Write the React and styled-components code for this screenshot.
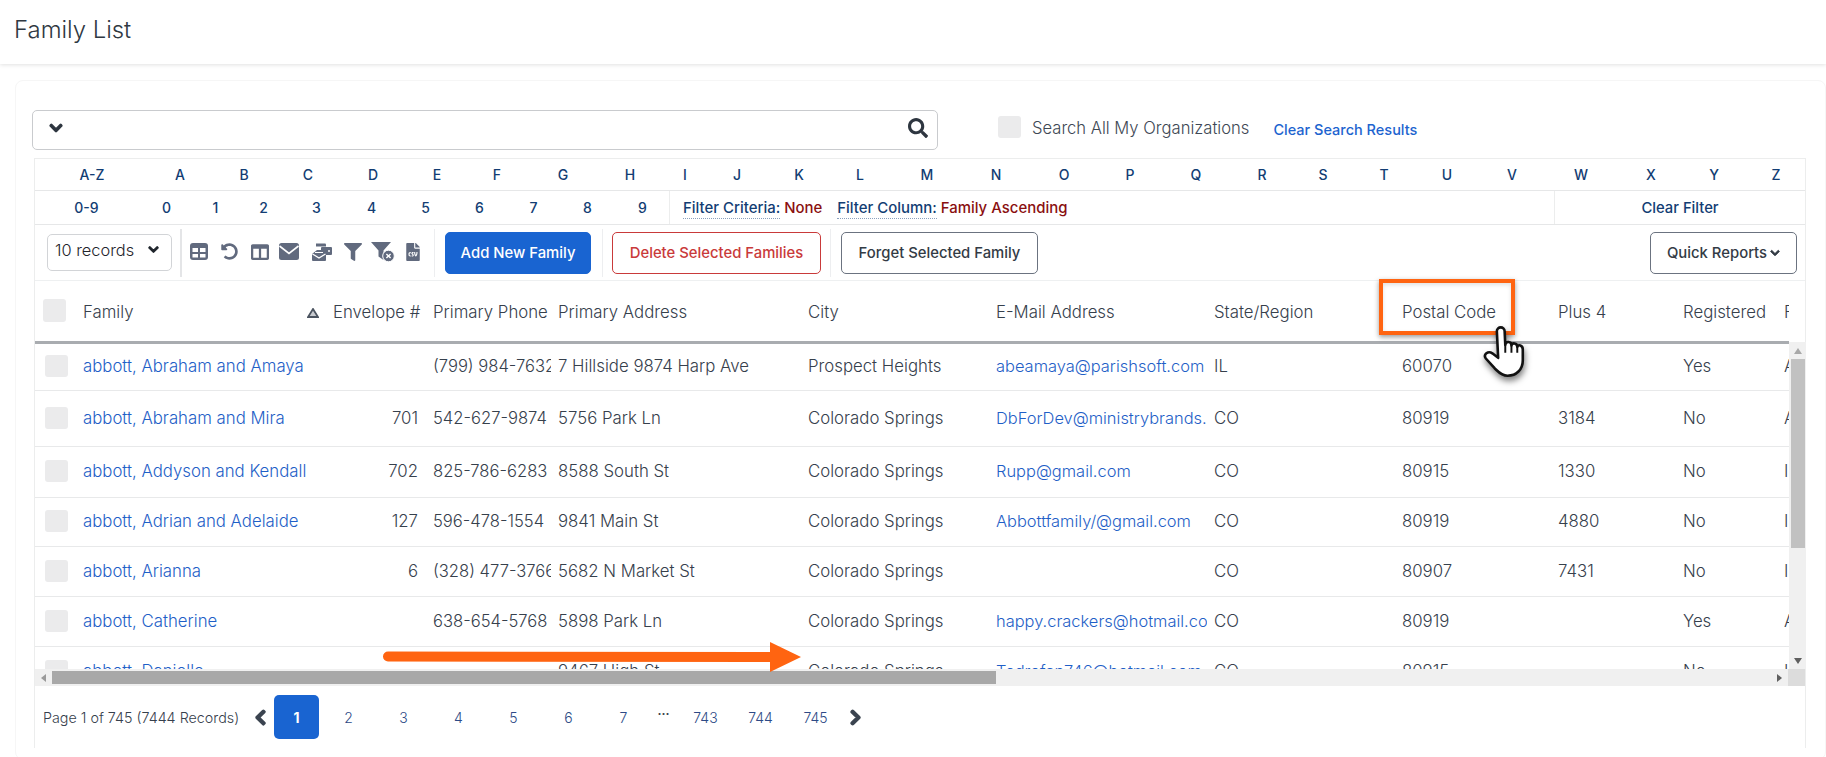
import React from "react";
import styled, { createGlobalStyle } from "styled-components";
import { FaChevronDown, FaChevronLeft, FaChevronRight, FaSearch, FaUndoAlt, FaColumns, FaFilter, FaFileCsv } from "react-icons/fa";

const Global = createGlobalStyle`
  html, body { margin: 0; padding: 0; height: 757px; overflow: hidden; background: #fff; }
  body { font-family: Inter, "Noto Sans", "Liberation Sans", sans-serif; color: #4a5563; }
  * { box-sizing: border-box; }
`;

const Page = styled.div`position: relative; width: 1826px; height: 757px; overflow: hidden; background: #fff;`;
const Header = styled.header`
  height: 64px; display: flex; align-items: center; padding: 0 0 5px 14px;
  background: #fff; box-shadow: 0 1px 4px rgba(0,0,0,.12);
`;
const Title = styled.h1`margin: 0; font-size: 23.9px; font-weight: 300; color: #2f3842;`;
const Card = styled.main`
  margin: 16px 0 0 15px; height: 680px; padding: 29px 19px 0 16px;
  border: 1px solid #f6f6f6; border-radius: 8px; background: #fff;
`;
const SearchRow = styled.div`display: flex; align-items: center; height: 40px;`;
const SearchBox = styled.div`
  width: 906px; height: 40px; display: flex; align-items: center; justify-content: space-between;
  padding: 0 9px 4px 16px; border: 1px solid #c9cbce; border-radius: 5px; color: #2e3640;
`;
const SearchCheck = styled.span`
  width: 23px; height: 22px; margin: -6px 11px 0 60px; border-radius: 3px; background: #ebebec;
`;
const SearchLabel = styled.span`font-size: 16.6px; font-weight: 300; margin-top: -5px; color: #3e4854;`;
const ClearLink = styled.a`margin: -2px 0 0 24px; font-size: 14.5px; font-weight: 500; color: #1d64cf; white-space: nowrap;`;

const Frame = styled.section`
  margin: 8px 0 0 2px; width: 1772px; border-left: 1px solid #eceded; border-right: 1px solid #eceded;
  border-top: 1px solid #eceded;
`;
const AlphaRow = styled.div`
  display: grid; grid-template-columns: ${p => p.$cols}; height: 32px; align-items: center;
  border-bottom: 1px solid #e6e7e8;
`;
const AlphaCell = styled.a`
  grid-row: 1; grid-column: ${p => p.$at}; justify-self: start; transform: translateX(-50%); white-space: nowrap;
  font-size: 14px; font-weight: 550; color: #123d73;
`;
const NumberRow = styled.div`display: flex; height: 34px; border-bottom: 1px solid #e6e7e8;`;
const NumberGrid = styled.div`
  display: grid; grid-template-columns: ${p => p.$cols}; width: 635px; flex: none; align-items: center;
  border-right: 1px solid #eceded;
`;
const FilterInfo = styled.div`flex: 1; display: flex; align-items: center; gap: 15px; padding-left: 13px; font-size: 14.95px; font-weight: 550;`;
const FilterItem = styled.span`color: #8a0f0f; white-space: nowrap;`;
const FilterKey = styled.span`color: #123d73; border-bottom: 1px dotted #8aa0bd; padding-bottom: 1px;`;
const ClearFilter = styled.a`
  width: 251px; display: flex; align-items: center; justify-content: center; border-left: 1px solid #eceded;
  font-size: 14.8px; font-weight: 550; color: #123d73;
`;
const Toolbar = styled.div`display: flex; align-items: center; height: 56px; padding-left: 12px; border-bottom: 1px solid #eef0f1;`;
const RecordSelect = styled.div`
  width: 125px; height: 37px; display: flex; align-items: center; justify-content: space-between;
  padding: 0 12px 6px 7px; border: 1px solid #d2d4d7; border-radius: 5px; font-size: 16.4px; font-weight: 300; color: #1f252c;
`;
const Divider = styled.span`
  width: ${p => p.$w || 1}px; height: 48px; margin: 0 ${p => p.$r ?? 9}px 0 ${p => p.$l ?? 9}px;
  background: ${p => (p.$w ? "#e4e5e7" : "#edeef0")};
`;
const Icons = styled.div`display: flex; align-items: center; width: 244px; height: 40px; margin-top: -2px; color: #616a7e;`;
const IconSlot = styled.span`display: flex; width: ${p => p.$w}px; margin-right: ${p => p.$m}px; justify-content: center;`;
const Button = styled.button`
  height: 42px; padding: 0; width: ${p => p.$w}px; border-radius: 5px; font: 550 14.85px Inter, sans-serif;
  border: 1px solid ${p => p.$c}; color: ${p => (p.$fill ? "#fff" : p.$t || p.$c)};
  background: ${p => (p.$fill ? p.$c : "#fff")}; white-space: nowrap;
`;
const Spacer = styled.span`flex: 1;`;
const ReportButton = styled(Button)`margin-right: 8px; display: flex; align-items: center; justify-content: center; gap: 3px;`;

const Middle = styled.div`display: flex; height: 388px;`;
const Viewport = styled.div`flex: none; width: 1754px; overflow: hidden;`;
const columns = "48px 250px 100px 125px 250px 188px 218px 188px 156px 125px 101px 100px";
const HeadRow = styled.div`
  display: grid; grid-template-columns: ${columns}; height: 63px; align-items: center; width: 1849px;
  border-bottom: 3px solid #a9acb0; font-size: 16.8px; font-weight: 300; color: #36404c;
`;
const HeadCheck = styled.span`width: 23px; height: 23px; margin: 0 0 2px 8px; border-radius: 3px; background: #ebebec;`;
const HeadCell = styled.span`
  display: flex; justify-content: space-between; align-items: center; padding: 1px 14px 0 0; white-space: nowrap;
`;
const SortMark = styled.svg`width: 12px; height: 10px; margin-top: 2px;`;
const Row = styled.div`
  display: grid; grid-template-columns: ${columns}; height: ${p => p.$h}px; align-items: center; width: 1849px;
  padding-bottom: 2px; border-bottom: 1px solid #e8e9ea; font-size: 16.8px; font-weight: 300; color: #36404c;
`;
const RowCheck = styled.span`width: 23px; height: 22px; margin-left: 10px; border-radius: 3px; background: #ebebec;`;
const Cell = styled.span`
  overflow: hidden; white-space: nowrap; margin-right: ${p => p.$gap ?? 7}px;
  text-align: ${p => p.$right ? "right" : "left"}; color: ${p => p.$link ? "#1f5fc7" : "inherit"};
`;
const MailCell = styled(Cell)`font-size: 16.45px;`;
const PhoneCell = styled(Cell)`font-size: 16.6px;`;
const VBar = styled.div`
  flex: none; width: 17px; margin-top: 61px; background: #f0f0f0; display: flex; flex-direction: column; align-items: center;
  justify-content: space-between; color: #5f5f5f;
`;
const VTop = styled.div`display: flex; flex-direction: column; align-items: center; width: 100%;`;
const ArrowBox = styled.span`height: 17px; display: flex; align-items: center; justify-content: center; font-size: 0;`;
const VThumb = styled.span`width: 14px; height: 189px; background: #c1c1c1;`;
const HBar = styled.div`display: flex; height: 17px; background: #f0f0f0; align-items: center;`;
const HThumb = styled.span`width: 944px; height: 13px; background: #a8a8a8;`;
const HArrow = styled.span`width: ${p => p.$w}px; flex: none; display: flex; align-items: center; justify-content: center; color: #6b6b6b;`;
const HTrack = styled.span`flex: 1;`;
const Corner = styled.span`width: 17px; height: 17px; background: #dcdcdc; flex: none;`;

const Pager = styled.nav`display: flex; align-items: center; height: 62px; padding: 0 0 0 8px;`;
const PagerText = styled.span`width: 203px; font-size: 14.3px; font-weight: 300; color: #36404c; white-space: nowrap;`;
const PageNav = styled.span`display: flex; width: ${p => p.$w}px; justify-content: center; color: #3b4450; font-size: 17px;`;
const PageLink = styled.a`
  width: ${p => p.$on ? 45 : 55}px; height: 44px; display: flex; align-items: center; justify-content: center; flex: none;
  margin-right: ${p => p.$on ? 2 : 0}px; border-radius: 5px; font-size: 14px; font-weight: ${p => p.$on ? 700 : 300};
  color: ${p => p.$on ? "#fff" : "#2d4a86"}; background: ${p => p.$on ? "#1964d1" : "transparent"};
`;
const Dots = styled.span`width: 29px; margin-left: -2px; text-align: center; margin-top: -14px; font-size: 12px; font-weight: 700; color: #3b4450;`;

const Highlight = styled.div`
  position: absolute; left: 1379px; top: 279px; width: 136px; height: 56px; border: 4px solid #ff6411;
  box-shadow: 0 2px 5px rgba(0,0,0,.4), inset 0 2px 4px rgba(0,0,0,.12);
`;
const Hand = styled.svg`
  position: absolute; left: 1480px; top: 324px; width: 47px; height: 57px;
  filter: drop-shadow(1px 4px 3px rgba(0,0,0,.5));
`;
const Arrow = styled.svg`position: absolute; left: 380px; top: 640px; width: 424px; height: 34px;`;

const Bold = { stroke: "currentColor", strokeWidth: 50 };

const TableIcon = () => (
  <svg width="18" height="17" viewBox="0 0 18 17"><rect width="18" height="17" rx="3" fill="currentColor"/><rect x="2.5" y="5" width="5.5" height="4" fill="#fff"/><rect x="10" y="5" width="5.5" height="4" fill="#fff"/><rect x="2.5" y="11" width="5.5" height="3.5" fill="#fff"/><rect x="10" y="11" width="5.5" height="3.5" fill="#fff"/></svg>
);
const MailIcon = () => (
  <svg width="20" height="17" viewBox="0 0 20 17"><rect width="20" height="17" rx="2.5" fill="currentColor"/><path d="M0.5 3 L10 10.5 L19.5 3" fill="none" stroke="#fff" strokeWidth="1.6"/></svg>
);
const MultiMailIcon = () => (
  <svg width="20" height="18" viewBox="0 0 20 18"><path d="M4 0.5h9a1 1 0 0 1 1 1v2H4z" fill="currentColor"/><rect x="9" y="4" width="11" height="8" rx="1" fill="currentColor"/><circle cx="17" cy="8" r="1" fill="#fff"/><path d="M0 11 L5 7 h5 l4 4 v6 a1 1 0 0 1 -1 1 H1 a1 1 0 0 1 -1 -1z" fill="currentColor"/><path d="M0.5 11 L7 15 L13.5 11" fill="none" stroke="#fff" strokeWidth="1.3"/><path d="M3 9.5 h8" stroke="#fff" strokeWidth="1"/></svg>
);
const FilterClear = () => (
  <svg width="24" height="20" viewBox="0 0 24 20"><path d="M0 0h20l-7.5 8.5V18l-5-3.5V8.5z" fill="currentColor"/><circle cx="17.5" cy="14" r="5.8" fill="currentColor" stroke="#fff" strokeWidth="1"/><path d="M15.4 11.9l4.2 4.2M19.6 11.9l-4.2 4.2" stroke="#fff" strokeWidth="1.4"/></svg>
);

const tracks = (list, start, end) => {
  const out = [`${list[0] - start}px`];
  for (let i = 1; i < list.length; i++) out.push(`${list[i] - list[i - 1]}px`);
  out.push(`${end - list[list.length - 1]}px`);
  return out.join(" ");
};

const letters = ["A-Z","A","B","C","D","E","F","G","H","I","J","K","L","M","N","O","P","Q","R","S","T","U","V","W","X","Y","Z"];
const letterX = [92,180,244,308,373,437,497,563,630,685,737,799,860,927,996,1064,1130,1196,1262,1323,1384,1447,1512,1581,1651,1714,1776];
const nums = ["0-9","0","1","2","3","4","5","6","7","8","9"];
const numX = [86,166,215,263,316,371,425,479,533,587,642];

const headers = ["Envelope #","Primary Phone","Primary Address","City","E-Mail Address","State/Region","Postal Code","Plus 4","Registered","Family Status"];
const rows = [
  [47,"abbott, Abraham and Amaya","","(799) 984-7632","7 Hillside 9874 Harp Ave","Prospect Heights","abeamaya@parishsoft.com","IL","60070","","Yes","Active"],
  [56,"abbott, Abraham and Mira","701","542-627-9874","5756 Park Ln","Colorado Springs","DbForDev@ministrybrands.com","CO","80919","3184","No","Active"],
  [51,"abbott, Addyson and Kendall","702","825-786-6283","8588 South St","Colorado Springs","Rupp@gmail.com","CO","80915","1330","No","Inactive"],
  [49,"abbott, Adrian and Adelaide","127","596-478-1554","9841 Main St","Colorado Springs","Abbottfamily/@gmail.com","CO","80919","4880","No","Inactive"],
  [50,"abbott, Arianna","6","(328) 477-3766","5682 N Market St","Colorado Springs","","CO","80907","7431","No","Inactive"],
  [50,"abbott, Catherine","","638-654-5768","5898 Park Ln","Colorado Springs","happy.crackers@hotmail.com","CO","80919","","Yes","Active"],
  [50,"abbott, Danielle","","","9467 High St","Colorado Springs","Tedrofan746@hotmail.com","CO","80915","","No","Inactive"],
];

export default function App() {
  return (
    <Page>
      <Global />
      <Header><Title>Family List</Title></Header>
      <Card>
        <SearchRow>
          <SearchBox>
            <FaChevronDown size={14} style={Bold} />
            <FaSearch size={20} />
          </SearchBox>
          <SearchCheck />
          <SearchLabel>Search All My Organizations</SearchLabel>
          <ClearLink>Clear Search Results</ClearLink>
        </SearchRow>
        <Frame>
          <AlphaRow $cols={tracks(letterX, 35, 1805)}>
            {letters.map((l, i) => <AlphaCell key={l} $at={i + 2}>{l}</AlphaCell>)}
          </AlphaRow>
          <NumberRow>
            <NumberGrid $cols={tracks(numX, 34.5, 669)}>
              {nums.map((n, i) => <AlphaCell key={n} $at={i + 2}>{n}</AlphaCell>)}
            </NumberGrid>
            <FilterInfo>
              <FilterItem><FilterKey>Filter Criteria:</FilterKey> None</FilterItem>
              <FilterItem><FilterKey>Filter Column:</FilterKey> Family Ascending</FilterItem>
            </FilterInfo>
            <ClearFilter>Clear Filter</ClearFilter>
          </NumberRow>
          <Toolbar>
            <RecordSelect>10 records <FaChevronDown size={11} style={Bold} /></RecordSelect>
            <Divider $w={2} $l={8} $r={8} />
            <Icons>
              <IconSlot $w={18} $m={12}><TableIcon /></IconSlot>
              <IconSlot $w={18} $m={12}><FaUndoAlt size={17} /></IconSlot>
              <IconSlot $w={19} $m={10}><FaColumns size={18} /></IconSlot>
              <IconSlot $w={20} $m={13}><MailIcon /></IconSlot>
              <IconSlot $w={20} $m={12}><MultiMailIcon /></IconSlot>
              <IconSlot $w={18} $m={9}><FaFilter size={18} /></IconSlot>
              <IconSlot $w={24} $m={11}><FilterClear /></IconSlot>
              <IconSlot $w={14} $m={0}><FaFileCsv size={18} /></IconSlot>
            </Icons>
            <Divider $l={0} $r={10} />
            <Button $w={146} $c="#1964d1" $fill>Add New Family</Button>
            <Divider $l={11} />
            <Button $w={209} $c="#c93a3a">Delete Selected Families</Button>
            <Divider $r={10} />
            <Button $w={197} $c="#6b7380" $t="#333b45">Forget Selected Family</Button>
            <Spacer />
            <ReportButton $w={147} $c="#6b7380" $t="#333b45">Quick Reports <FaChevronDown size={10} style={Bold} /></ReportButton>
          </Toolbar>
          <Middle>
            <Viewport>
              <HeadRow>
                <HeadCheck />
                <HeadCell>Family
                  <SortMark viewBox="0 0 12 10"><path d="M6 1 L11 9 H1 Z" fill="#c8cbd0" stroke="#4b5460" strokeWidth="1.8"/></SortMark>
                </HeadCell>
                {headers.map(h => <HeadCell key={h}>{h}</HeadCell>)}
              </HeadRow>
              {rows.map(([h, fam, env, ph, addr, city, mail, st, zip, plus, reg, status]) => (
                <Row key={fam} $h={h}>
                  <RowCheck />
                  <Cell $link>{fam}</Cell>
                  <Cell $right $gap={15}>{env}</Cell>
                  <PhoneCell>{ph}</PhoneCell>
                  <Cell>{addr}</Cell>
                  <Cell>{city}</Cell>
                  <MailCell $link>{mail}</MailCell>
                  <Cell>{st}</Cell>
                  <Cell>{zip}</Cell>
                  <Cell>{plus}</Cell>
                  <Cell>{reg}</Cell>
                  <Cell>{status}</Cell>
                </Row>
              ))}
            </Viewport>
            <VBar>
              <VTop>
                <ArrowBox><svg width="8" height="6"><path d="M4 0L8 6H0z" fill="#a8a8a8"/></svg></ArrowBox>
                <VThumb />
              </VTop>
              <ArrowBox><svg width="8" height="6"><path d="M4 6L8 0H0z" fill="#5f5f5f"/></svg></ArrowBox>
            </VBar>
          </Middle>
          <HBar>
            <HArrow $w={17}><svg width="5" height="8"><path d="M0 4L5 0V8z" fill="#9a9a9a"/></svg></HArrow>
            <HThumb />
            <HTrack />
            <HArrow $w={17}><svg width="5" height="8"><path d="M5 4L0 0V8z" fill="#5f5f5f"/></svg></HArrow>
            <Corner />
          </HBar>
          <Pager>
            <PagerText>Page 1 of 745 (7444 Records)</PagerText>
            <PageNav $w={28}><FaChevronLeft style={Bold} /></PageNav>
            <PageLink $on>1</PageLink>
            {[2,3,4,5,6,7].map(n => <PageLink key={n}>{n}</PageLink>)}
            <Dots>...</Dots>
            {[743,744,745].map(n => <PageLink key={n}>{n}</PageLink>)}
            <PageNav $w={25}><FaChevronRight style={Bold} /></PageNav>
          </Pager>
        </Frame>
      </Card>
      <Highlight />
      <Hand viewBox="385 160 145 175">
        <path d="M437 182 C437 166 461 166 461 182 L463 224 C464 212 482 212 482 226 C484 216 500 218 500 230 C502 222 517 224 517 238 L517 272 C517 300 497 319 470 319 C450 319 441 306 430 296 L403 266 C394 254 410 241 423 250 L441 264 Z" fill="#fff" stroke="#111" strokeWidth="8" strokeLinejoin="round"/>
        <path d="M463 224 V248 M482 226 V248 M500 230 V248" stroke="#111" strokeWidth="6" fill="none"/>
      </Hand>
      <Arrow viewBox="0 0 424 34">
        <path d="M8 11.5 L390 12 L390 2 L421 17 L390 32 L390 22 L8 21.5 A5 5 0 0 1 8 11.5 Z" fill="#ff6411"/>
      </Arrow>
    </Page>
  );
}
